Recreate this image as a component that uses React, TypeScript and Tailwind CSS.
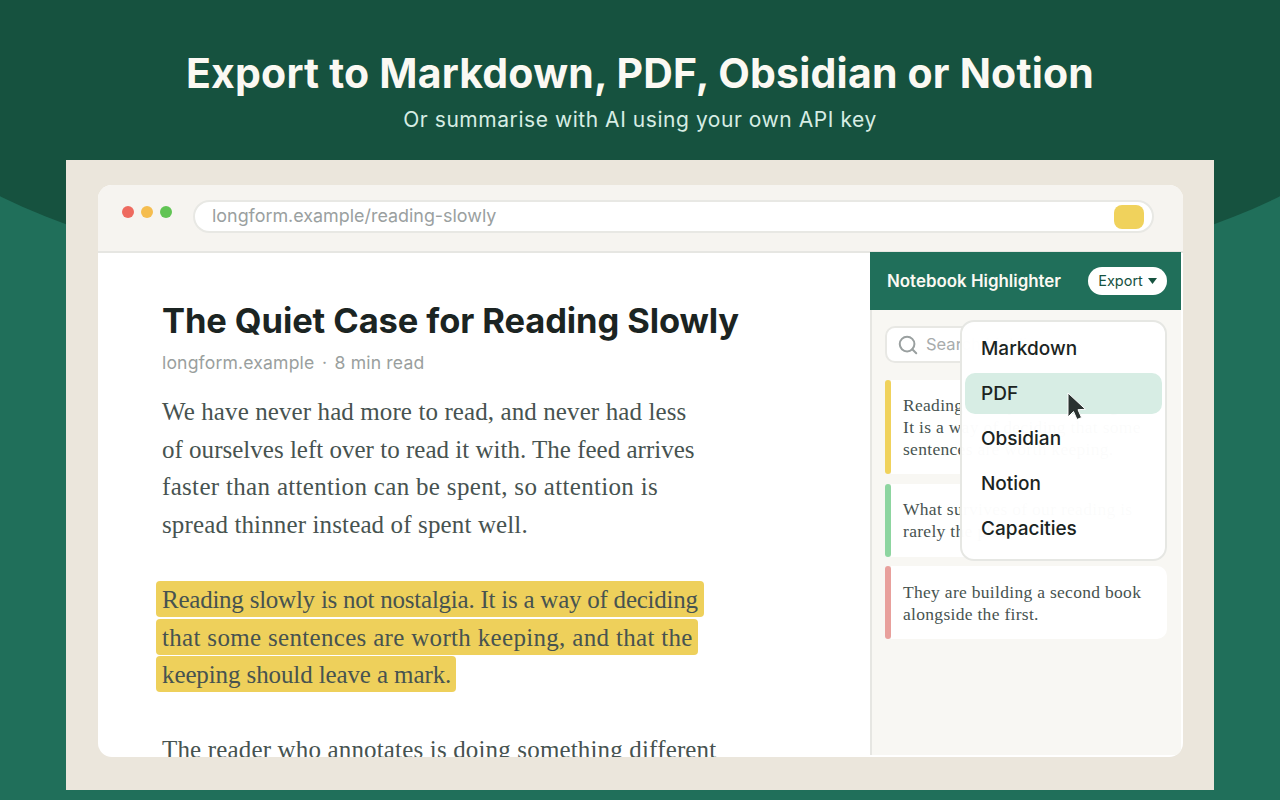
import { Search } from 'lucide-react';

const sans = "font-['Inter','Noto_Sans',sans-serif]";
const serif = "font-['Liberation_Serif','DejaVu_Serif',serif]";

const exportItems = ['Markdown', 'PDF', 'Obsidian', 'Notion', 'Capacities'];

const notes = [
  {
    bar: 'bg-[#f0d25c]',
    lines: ['Reading slowly is not nostalgia.', 'It is a way of deciding that some', 'sentences are worth keeping.'],
    box: 'h-[94px] mb-[10px]',
    inset: 'pt-[14px]',
  },
  {
    bar: 'bg-[#8dd5a0]',
    lines: ['What survives of our reading is', 'rarely the plot.'],
    box: 'h-[73px] mb-[9px]',
    inset: 'pt-[14px]',
  },
  {
    bar: 'bg-[#e8a09c]',
    lines: ['They are building a second book', 'alongside the first.'],
    box: 'h-[73px]',
    inset: 'pt-[15px]',
  },
];

function NoteCard({ bar, lines, box, inset }: { bar: string; lines: string[]; box: string; inset: string }) {
  return (
    <div className={`flex ${box}`}>
      <div className={`w-[6px] shrink-0 rounded-full ${bar}`} />
      <div className={`flex-1 rounded-r-[10px] bg-white pl-[12px] text-[17.5px] leading-[22px] tracking-[0.3px] text-[#475350] ${inset} ${serif}`}>
        {lines.map((line) => (
          <div key={line} className="whitespace-nowrap">{line}</div>
        ))}
      </div>
    </div>
  );
}

function Highlight({ width, children }: { width: string; children: React.ReactNode }) {
  return (
    <div className={`ml-[-6px] mb-[1.5px] flex h-[36px] items-center whitespace-nowrap rounded-[4px] bg-[#eed05b] px-[6px] pt-[2px] ${width}`}>
      {children}
    </div>
  );
}

export default function App() {
  return (
    <div className={`relative h-[800px] w-[1280px] overflow-hidden bg-[#206f5a] ${sans}`}>
      {/* dark curved header backdrop */}
      <div className="absolute left-[-128px] top-[-195px] h-[504px] w-[1536px] rounded-[50%] bg-[#16523f]" />

      <div className="relative">
        <header className="flex h-[160px] flex-col items-center pt-[46px] text-center">
          <h1 className="text-[41px] font-bold leading-[54px] tracking-[0.2px] text-[#fbf9f3]">
            Export to Markdown, PDF, Obsidian or Notion
          </h1>
          <p className="mt-[5px] text-[21px] leading-[30px] tracking-[0.55px] text-[#d7ede4]">
            Or summarise with AI using your own API key
          </p>
        </header>

        <div className="mx-[66px] h-[630px] bg-[#ebe6dc] pl-[32px] pr-[31px] pt-[25px]">
          <div className="flex h-[572px] flex-col overflow-hidden rounded-[14px] bg-white">
            {/* browser toolbar */}
            <div className="flex h-[68px] shrink-0 items-start border-b-2 border-[#e6e6e2] bg-[#f6f4f0] pl-[24px] pr-[29px] pt-[15px]">
              <div className="mt-[6px] flex gap-[7px]">
                <span className="h-[12px] w-[12px] rounded-full bg-[#ee6a5f]" />
                <span className="h-[12px] w-[12px] rounded-full bg-[#f5bd4f]" />
                <span className="h-[12px] w-[12px] rounded-full bg-[#61c454]" />
              </div>
              <div className="ml-[21px] flex h-[33px] flex-1 items-center justify-between rounded-full border-2 border-[#e8e8e4] bg-white pl-[17px] pr-[8px]">
                <span className="text-[17.9px] text-[#9aa0a0]">longform.example/reading-slowly</span>
                <span className="h-[24px] w-[30px] rounded-[8px] bg-[#f0d25c]" />
              </div>
            </div>

            <div className="flex min-h-0 flex-1">
              {/* article */}
              <article className="w-[772px] shrink-0 overflow-hidden pl-[64px] pt-[46px]">
                <h2 className="whitespace-nowrap text-[34.5px] font-bold leading-[44px] tracking-[-0.1px] text-[#1b2422]">
                  The Quiet Case for Reading Slowly
                </h2>
                <p className="mt-[7px] whitespace-nowrap text-[17.6px] leading-[26px] tracking-[0.15px] text-[#9a9f9e]">
                  longform.example<span className="mx-[7.5px]">·</span>8 min read
                </p>
                <div className={`mt-[17px] whitespace-nowrap text-[25px] leading-[37.5px] text-[#475350] ${serif}`}>
                  <div className="tracking-[0.1px]">We have never had more to read, and never had less</div>
                  <div className="tracking-[0.01px]">of ourselves left over to read it with. The feed arrives</div>
                  <div className="tracking-[0.32px]">faster than attention can be spent, so attention is</div>
                  <div className="tracking-[0.13px]">spread thinner instead of spent well.</div>
                  <div className="mt-[38px]">
                    <Highlight width="w-[548px] tracking-[-0.24px]">Reading slowly is not nostalgia. It is a way of deciding</Highlight>
                    <Highlight width="w-[542px] tracking-[0.32px]">that some sentences are worth keeping, and that the</Highlight>
                    <Highlight width="w-[300px] tracking-[-0.11px]">keeping should leave a mark.</Highlight>
                  </div>
                  <div className="mt-[39px] tracking-[0.16px]">The reader who annotates is doing something different</div>
                </div>
              </article>

              {/* notebook sidebar */}
              <aside className="relative mb-[2px] mr-[2px] mt-[-1px] flex-1 border-l-2 border-[#e6e6e2] bg-[#f8f7f3]">
                <div className="ml-[-2px] flex h-[58px] items-center justify-between bg-[#206f5a] pl-[17px] pr-[14px]">
                  <span className="pt-[2px] text-[16.9px] font-semibold text-[#fbf9f3]">Notebook Highlighter</span>
                  <button className="flex h-[28px] w-[79px] items-center justify-center gap-[5px] rounded-full bg-white text-[14.5px] text-[#16523f]">
                    Export
                    <svg width="9" height="6" viewBox="0 0 9 6"><path d="M0 0h9L4.5 6z" fill="#16523f" /></svg>
                  </button>
                </div>
                <div className="pl-[13px] pr-[14px] pt-[16px]">
                  <div className="flex h-[37px] w-[150px] items-center gap-[7px] overflow-hidden whitespace-nowrap rounded-[10px] border-2 border-[#e8e8e4] bg-white pl-[10px]">
                    <Search size={22} strokeWidth={2.2} className="shrink-0 text-[#9aa0a0]" />
                    <span className="text-[16.5px] text-[#a8acac]">Search highlights</span>
                  </div>
                  <div className="mt-[17px]">
                    {notes.map((note) => (
                      <NoteCard key={note.bar} {...note} />
                    ))}
                  </div>
                </div>

                {/* export menu */}
                <div className="absolute left-[88px] top-[68px] h-[241px] w-[207px] rounded-[14px] border-2 border-[#e6e7e3] bg-white/[0.98] px-[3px] pt-[6px]">
                  {exportItems.map((item) => (
                    <div
                      key={item}
                      className={`mb-[4px] flex h-[41px] items-center rounded-[10px] pl-[16px] pt-[2px] text-[19px] font-medium text-[#1b2422] ${item === 'PDF' ? 'bg-[#d7ede4]' : ''}`}
                    >
                      {item}
                    </div>
                  ))}
                </div>

                {/* pointer */}
                <svg className="absolute left-[195px] top-[140px]" width="22" height="30" viewBox="0 0 22 30">
                  <path d="M1 1v24l5.5-5.5L10 27.5l4.5-2-3.5-7.8 7.5-.4z" fill="#2a3230" stroke="#fff" strokeWidth="1" />
                </svg>
              </aside>
            </div>
          </div>
        </div>
      </div>
    </div>
  );
}
